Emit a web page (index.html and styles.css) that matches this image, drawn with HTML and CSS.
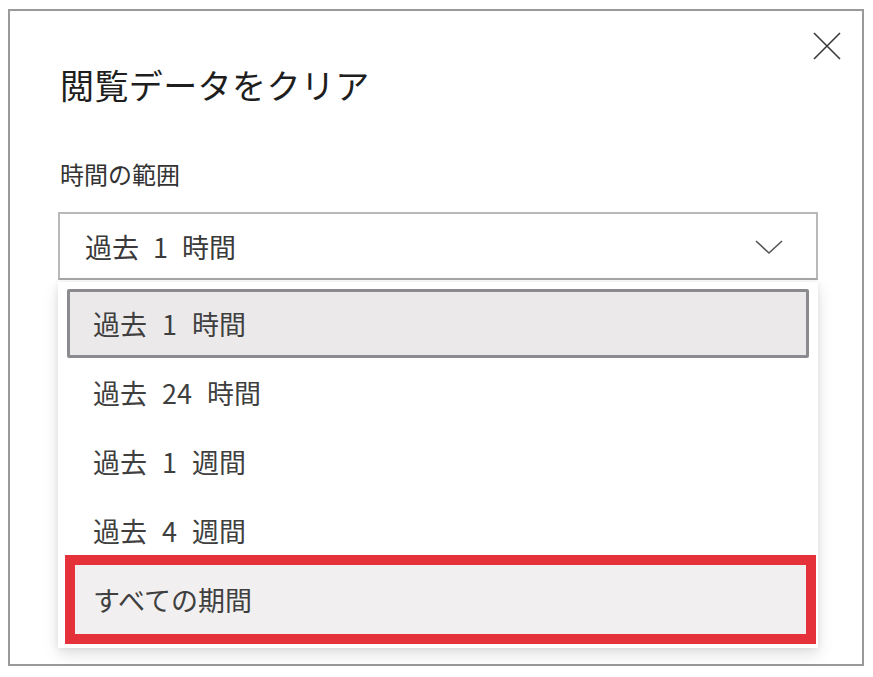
FILE: index.html
```html
<!DOCTYPE html>
<html lang="ja">
<head>
<meta charset="utf-8">
<title>閲覧データをクリア</title>
<link rel="stylesheet" href="styles.css">
</head>
<body>
<div class="frame">
  <button class="close" aria-label="閉じる">
    <svg width="28" height="28" viewBox="0 0 28 28"><path d="M1 1 L27 27 M27 1 L1 27" stroke="#3a3a3a" stroke-width="1.6" fill="none"/></svg>
  </button>
  <h1 class="title">閲覧データをクリア</h1>
  <div class="label">時間の範囲</div>
  <div class="select">
    <span class="select-text">過去 1 時間</span>
    <svg class="chevron" width="28" height="16" viewBox="0 0 28 16"><path d="M1 2 L14 14 L27 2" stroke="#555" stroke-width="1.6" fill="none"/></svg>
  </div>
  <ul class="menu">
    <li class="item selected">過去 1 時間</li>
    <li class="item">過去 24 時間</li>
    <li class="item">過去 1 週間</li>
    <li class="item">過去 4 週間</li>
    <li class="item hover">すべての期間</li>
  </ul>
</div>
</body>
</html>
```

FILE: styles.css
```css
html, body {
  margin: 0;
  padding: 0;
  background: #ffffff;
}
body {
  font-family: "Noto Sans CJK JP", "Noto Sans", sans-serif;
}
.frame {
  position: relative;
  box-sizing: border-box;
  width: 856px;
  height: 657px;
  margin: 9px 0 0 8px;
  border: 2px solid #9a9a9a;
  padding: 50px 44px 0 48px;
  background: #ffffff;
}
.close {
  position: absolute;
  top: 21px;
  right: 21px;
  width: 28px;
  height: 28px;
  padding: 0;
  border: 0;
  background: transparent;
  display: flex;
}
.title {
  margin: 0 0 0 2px;
  height: 48px;
  line-height: 48px;
  font-size: 34px;
  font-weight: 400;
  color: #1e1e1e;
  letter-spacing: 0.4px;
}
.label {
  margin: 50px 0 0 2px;
  height: 30px;
  line-height: 30px;
  font-size: 24px;
  color: #333333;
}
.select {
  box-sizing: border-box;
  margin-top: 23px;
  height: 68px;
  border: 2px solid #b9b9b9;
  border-bottom-color: #a8a8a8;
  padding: 0 33px 0 25px;
  display: flex;
  align-items: center;
  justify-content: space-between;
  background: #ffffff;
}
.select-text {
  font-size: 27px;
  color: #3a3a3a;
  word-spacing: 8px;
}
.chevron {
  margin-top: 2px;
}
.menu {
  list-style: none;
  margin: 2px 0 0 0;
  padding: 7px 0 14px 0;
  background: #ffffff;
  box-shadow: 0 6px 14px rgba(0, 0, 0, 0.13), 0 0 6px rgba(0, 0, 0, 0.07);
}
.item {
  box-sizing: border-box;
  height: 69px;
  margin: 0 9px;
  padding-left: 26px;
  display: flex;
  align-items: center;
  font-size: 27px;
  color: #3f3f3f;
  word-spacing: 9px;
}
.item.selected {
  border: 3px solid #8b8a8e;
  border-radius: 2px;
  background: #ebe9ea;
  padding-left: 23px;
}
.item.hover {
  margin: 0 12px 0 17px;
  padding-left: 18px;
  background: #f1eff0;
  outline: 10px solid #e4313a;
}
```
